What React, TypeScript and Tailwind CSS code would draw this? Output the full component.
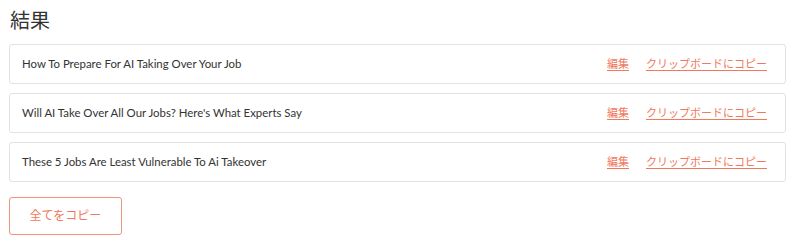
const results = [
  'How To Prepare For AI Taking Over Your Job',
  "Will AI Take Over All Our Jobs? Here's What Experts Say",
  'These 5 Jobs Are Least Vulnerable To Ai Takeover',
]

export default function App() {
  return (
    <div
      className="w-[800px] h-[248px] bg-white px-[9px] pt-[6px]"
      style={{ fontFamily: 'Lato, "Noto Sans CJK JP", sans-serif' }}
    >
      {/* Title */}
      <h2 className="text-[20px] leading-[28px] text-[#333] font-normal pl-px">結果</h2>

      {/* Result rows */}
      <div className="mt-[10px] w-[777px] flex flex-col gap-[9px]">
        {results.map((title) => (
          <div
            key={title}
            className="h-[40px] flex items-center justify-between border border-[#e2e2e2] rounded-[3px] pl-[12px] pr-[18px]"
          >
            <span className="text-[11.4px] text-[#333]">{title}</span>
            <div className="flex items-center gap-[17px] text-[11px] text-[#f0785c]">
              <a href="#" className="underline underline-offset-2">編集</a>
              <a href="#" className="underline underline-offset-2">クリップボードにコピー</a>
            </div>
          </div>
        ))}
      </div>

      {/* Copy all */}
      <button className="mt-[15px] w-[113px] h-[38px] border border-[#f0927b] rounded-[3px] text-[12px] text-[#f0785c] bg-white">
        全てをコピー
      </button>
    </div>
  )
}
